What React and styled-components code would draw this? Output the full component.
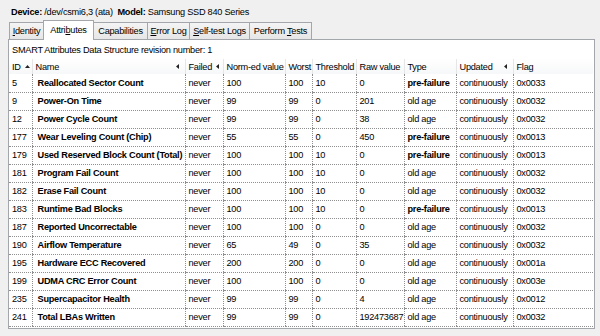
import styled, { createGlobalStyle } from "styled-components";

const GlobalStyle = createGlobalStyle`
  html, body {
    margin: 0;
    padding: 0;
    background: #f0f0f0;
  }
  body {
    font-family: "Liberation Sans", Arial, sans-serif;
    font-size: 9.2px;
    letter-spacing: -0.25px;
    color: #000;
  }
`;

const Window = styled.div`
  width: 600px;
  height: 336px;
  box-sizing: border-box;
  padding: 0 5px 0 8px;
  overflow: hidden;
`;

const DeviceLine = styled.div`
  height: 20px;
  box-sizing: border-box;
  padding: 5px 0 0 3px;
  line-height: 14px;
  white-space: nowrap;
`;

const TabBar = styled.div`
  display: flex;
  align-items: flex-end;
  height: 19px;
  padding-left: 1px;
  position: relative;
  z-index: 2;
`;

const Tab = styled.div`
  width: ${(p) => p.$w}px;
  height: ${(p) => (p.$active ? 20 : 17)}px;
  margin-bottom: ${(p) => (p.$active ? -1 : 0)}px;
  margin-left: -1px;
  &:first-child {
    margin-left: 0;
  }
  box-sizing: border-box;
  border: 1px solid #a3a6aa;
  border-bottom: none;
  background: ${(p) =>
    p.$active ? "#ffffff" : "linear-gradient(#f4f4f4, #e6e6e6)"};
  position: relative;
  z-index: ${(p) => (p.$active ? 3 : 1)};
  display: flex;
  align-items: center;
  justify-content: center;
  padding-bottom: ${(p) => (p.$active ? 1 : 0)}px;
  white-space: nowrap;
`;

const Panel = styled.div`
  height: 290px;
  box-sizing: border-box;
  border: 1px solid #a3a6aa;
  background: #fff;
  overflow: hidden;
`;

const Caption = styled.div`
  height: 19px;
  box-sizing: border-box;
  padding: 2px 0 0 3px;
  line-height: 17px;
`;

const Grid = styled.table`
  border-collapse: collapse;
  table-layout: fixed;
  width: 584px;
`;

const Head = styled.th`
  height: 15px;
  padding: 0 0 0 3px;
  font-weight: normal;
  text-align: left;
  white-space: nowrap;
  overflow: hidden;
  background: linear-gradient(#ffffff, #f6f7f8);
  border-right: 1px solid #e6e6e6;
  &:last-child {
    border-right: none;
  }
`;

const HeadInner = styled.div`
  display: flex;
  align-items: center;
  justify-content: ${(p) => (p.$spread ? "space-between" : "flex-start")};
  gap: 4px;
  padding-right: ${(p) => (p.$spread ? 6 : 0)}px;
  svg {
    flex-shrink: 0;
  }
`;

const Row = styled.tr`
  height: 18px;
`;

const Cell = styled.td`
  padding: 0 0 0 ${(p) => (p.$indent ? 5 : 3)}px;
  font-weight: ${(p) => (p.$bold ? "bold" : "normal")};
  white-space: nowrap;
  overflow: hidden;
  border-bottom: 1px dotted #8f8f8f;
  border-left: 1px dotted #8f8f8f;
  &:first-child {
    border-left: none;
  }
`;

const SortUp = () => (
  <svg width="5" height="3" viewBox="0 0 5 3">
    <path d="M0 3 L2.5 0 L5 3 Z" fill="#222" />
  </svg>
);

const SortSide = () => (
  <svg width="3" height="5" viewBox="0 0 3 5">
    <path d="M3 0 L0 2.5 L3 5 Z" fill="#222" />
  </svg>
);

const tabs = [
  { label: <><u>I</u>dentity</>, w: 35 },
  { label: <>Attri<u>b</u>utes</>, w: 51, active: true },
  { label: <>Capabilities</>, w: 55 },
  { label: <><u>E</u>rror Log</>, w: 43 },
  { label: <><u>S</u>elf-test Logs</>, w: 61 },
  { label: <>Perform <u>T</u>ests</>, w: 63 },
];

const columns = [
  { title: "ID", w: 23, sort: "up" },
  { title: "Name", w: 153, sort: "side" },
  { title: "Failed", w: 38, sort: "side" },
  { title: "Norm-ed value", w: 62 },
  { title: "Worst", w: 27 },
  { title: "Threshold", w: 44 },
  { title: "Raw value", w: 48 },
  { title: "Type", w: 52 },
  { title: "Updated", w: 57, sort: "side" },
  { title: "Flag", w: 80 },
];

const attrs = [
  ["5", "Reallocated Sector Count", "100", "100", "10", "0", "pre-failure", "0x0033"],
  ["9", "Power-On Time", "99", "99", "0", "201", "old age", "0x0032"],
  ["12", "Power Cycle Count", "99", "99", "0", "38", "old age", "0x0032"],
  ["177", "Wear Leveling Count (Chip)", "55", "55", "0", "450", "pre-failure", "0x0013"],
  ["179", "Used Reserved Block Count (Total)", "100", "100", "10", "0", "pre-failure", "0x0013"],
  ["181", "Program Fail Count", "100", "100", "10", "0", "old age", "0x0032"],
  ["182", "Erase Fail Count", "100", "100", "10", "0", "old age", "0x0032"],
  ["183", "Runtime Bad Blocks", "100", "100", "10", "0", "pre-failure", "0x0013"],
  ["187", "Reported Uncorrectable", "100", "100", "0", "0", "old age", "0x0032"],
  ["190", "Airflow Temperature", "65", "49", "0", "35", "old age", "0x0032"],
  ["195", "Hardware ECC Recovered", "200", "200", "0", "0", "old age", "0x001a"],
  ["199", "UDMA CRC Error Count", "100", "100", "0", "0", "old age", "0x003e"],
  ["235", "Supercapacitor Health", "99", "99", "0", "4", "old age", "0x0012"],
  ["241", "Total LBAs Written", "99", "99", "0", "192473687", "old age", "0x0032"],
];

export default function App() {
  return (
    <Window>
      <GlobalStyle />
      <DeviceLine>
        <b>Device:</b> /dev/csmi6,3 (ata)&nbsp; <b>Model:</b> Samsung SSD 840 Series
      </DeviceLine>
      <TabBar>
        {tabs.map((t, i) => (
          <Tab key={i} $w={t.w} $active={t.active}>
            <span>{t.label}</span>
          </Tab>
        ))}
      </TabBar>
      <Panel>
        <Caption>SMART Attributes Data Structure revision number: 1</Caption>
        <Grid>
          <colgroup>
            {columns.map((c) => (
              <col key={c.title} style={{ width: c.w }} />
            ))}
          </colgroup>
          <thead>
            <tr>
              {columns.map((c) => (
                <Head key={c.title}>
                  <HeadInner $spread={c.sort === "side"}>
                    <span>{c.title}</span>
                    {c.sort === "up" && <SortUp />}
                    {c.sort === "side" && <SortSide />}
                  </HeadInner>
                </Head>
              ))}
            </tr>
          </thead>
          <tbody>
            {attrs.map(([id, name, value, worst, thresh, raw, type, flag]) => (
              <Row key={id}>
                <Cell>{id}</Cell>
                <Cell $bold $indent>{name}</Cell>
                <Cell>never</Cell>
                <Cell>{value}</Cell>
                <Cell>{worst}</Cell>
                <Cell>{thresh}</Cell>
                <Cell>{raw}</Cell>
                <Cell $bold={type === "pre-failure"}>{type}</Cell>
                <Cell>continuously</Cell>
                <Cell>{flag}</Cell>
              </Row>
            ))}
          </tbody>
        </Grid>
      </Panel>
    </Window>
  );
}
